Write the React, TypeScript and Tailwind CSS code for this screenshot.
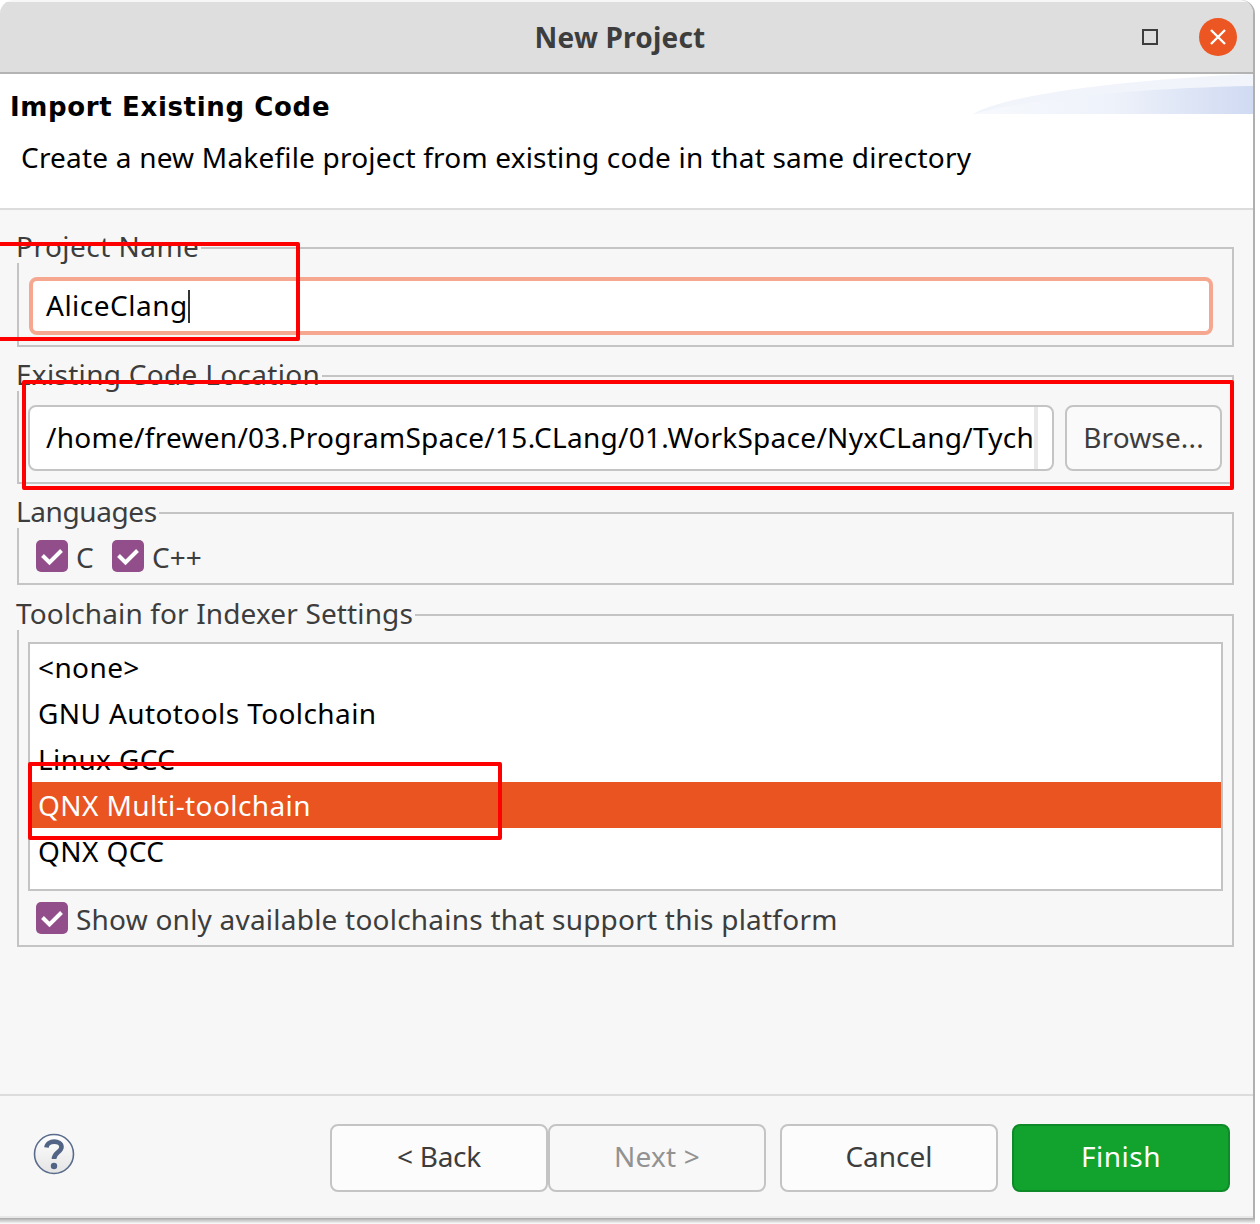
import type { ReactNode } from "react";

const uiFont = "font-['Noto_Sans','Open_Sans',sans-serif]";

function CheckBox() {
  return (
    <span className="flex h-8 w-8 shrink-0 items-center justify-center rounded-[5px] bg-[#924d8b]">
      <svg width="24" height="24" viewBox="0 0 24 24" fill="none">
        <path d="M2.5 11.5 L9.5 18.5 L21.5 6.5" stroke="#ffffff" strokeWidth="4" />
      </svg>
    </span>
  );
}

function Group({ title, titleClass, className, children }: { title: string; titleClass: string; className: string; children: ReactNode }) {
  return (
    <fieldset className={`ml-[17px] mr-[19px] min-w-0 border-2 border-[#c4c4c4] ${className}`}>
      <legend className={`-ml-[3px] h-[30px] bg-[#f7f7f7] pr-0.5 text-[28px] leading-[26px] text-[#3d3d3d] ${titleClass}`}>
        {title}
      </legend>
      {children}
    </fieldset>
  );
}

function FooterButton({ label, className }: { label: string; className: string }) {
  return (
    <button className={`flex h-[68px] w-[218px] items-center justify-center rounded-lg border-2 pb-1 text-[28px] ${className}`}>
      {label}
    </button>
  );
}

const toolchains = ["<none>", "GNU Autotools Toolchain", "Linux GCC", "QNX Multi-toolchain", "QNX QCC"];

export default function App() {
  return (
    <div className={`relative h-[1224px] w-[1260px] overflow-hidden bg-white ${uiFont}`}>
      <div className="flex h-[1218px] w-[1255px] flex-col overflow-hidden rounded-t-[14px] border-r-2 border-r-[#b0b0b0] bg-[#f7f7f7] pt-0.5">
        {/* Title bar */}
        <div className="relative flex h-[72px] shrink-0 items-center justify-center border-b-2 border-[#b3b3b3] bg-[#dedede] pr-[13px]">
          <span className="text-[28px] font-bold tracking-[0.2px] text-[#3d3d3d]">New Project</span>
          <span className="absolute left-[1142px] top-[27px] h-4 w-4 border-2 border-[#3d3d3d]" />
          <span className="absolute left-[1199px] top-[16px] flex h-[38px] w-[38px] items-center justify-center rounded-full bg-[#ec5623]">
            <svg width="20" height="20" viewBox="0 0 20 20" fill="none">
              <path d="M3 3 L17 17 M17 3 L3 17" stroke="#ffffff" strokeWidth="2.4" />
            </svg>
          </span>
        </div>

        {/* Wizard header */}
        <div className="relative h-[136px] shrink-0 border-b-2 border-[#dcdcdc] bg-white">
          <svg className="absolute left-[973px] top-0" width="280" height="40" viewBox="0 0 280 40">
            <defs>
              <linearGradient id="banner" x1="0" y1="0" x2="1" y2="0">
                <stop offset="0" stopColor="#f7f9fd" />
                <stop offset="0.5" stopColor="#eef2fa" />
                <stop offset="1" stopColor="#d0daf2" />
              </linearGradient>
            </defs>
            <path d="M0 40 C30 22 140 6 280 0 L280 40 Z" fill="#f1f4fb" />
            <path d="M0 40 C60 24 170 14 280 12 L280 40 Z" fill="url(#banner)" />
          </svg>
          <div className="pl-[10px] pt-[15px] font-['DejaVu_Sans',sans-serif] text-[26px] font-bold leading-[36px] tracking-[0.65px] text-black">
            Import Existing Code
          </div>
          <div className="relative pl-[21px] pt-[13px] text-[28px] leading-[38px] tracking-[0.2px] text-black">
            Create a new Makefile project from existing code in that same directory
          </div>
        </div>

        {/* Form */}
        <div className="flex flex-1 flex-col pt-[23px]">
          <Group title="Project Name" titleClass="tracking-[0.47px]" className="pb-[10px]">
            <div className="ml-[10px] mr-[19px] mt-[14px] flex h-[58px] items-center rounded-lg border-4 border-[#f5a78f] bg-white pb-0.5 pl-[13px] text-[28px] tracking-[0.5px] text-black">
              AliceClang
              <span className="mt-0.5 h-[33px] w-0.5 bg-[#333333]" />
            </div>
          </Group>

          <Group title="Existing Code Location" titleClass="tracking-[0.3px]" className="mt-[14px] pb-[11px]">
            <div className="ml-[9px] mr-[10px] mt-[14px] flex h-[66px] gap-[11px]">
              <div className="flex flex-1 items-center overflow-hidden rounded-lg border-2 border-[#c4c4c4] bg-white pl-4 pr-[14px]">
                <div className="flex-1 overflow-hidden whitespace-nowrap pb-0.5 text-[28px] tracking-[0.28px] text-black">
                  /home/frewen/03.ProgramSpace/15.CLang/01.WorkSpace/NyxCLang/Tych
                </div>
                <div className="h-full w-1 shrink-0 bg-[#e8e8e8]" />
              </div>
              <button className="w-[157px] rounded-lg border-2 border-[#c4c4c4] bg-[#fafafa] pb-0.5 text-[28px] tracking-[0.14px] text-[#3d3d3d]">
                Browse...
              </button>
            </div>
          </Group>

          <Group title="Languages" titleClass="tracking-[-0.4px]" className="mt-[14px] pb-[11px]">
            <div className="ml-[17px] mt-3 flex h-8 items-center text-[28px] text-[#3d3d3d]">
              <CheckBox />
              <span className="ml-2 w-[36px] pt-0.5">C</span>
              <CheckBox />
              <span className="ml-2 pt-0.5">C++</span>
            </div>
          </Group>

          <Group title="Toolchain for Indexer Settings" titleClass="tracking-[0.13px]" className="mt-[15px] pb-[11px]">
            <div className="mx-[9px] mt-3 h-[249px] border-2 border-[#c4c4c4] bg-white text-[28px] tracking-[0.4px]">
              {toolchains.map((name) => (
                <div
                  key={name}
                  className={`h-[46px] pl-2 leading-[46px] ${name === "QNX Multi-toolchain" ? "bg-[#e95420] text-white" : "text-black"}`}
                >
                  {name}
                </div>
              ))}
            </div>
            <div className="ml-[17px] mt-[11px] flex h-8 items-center gap-2 text-[28px] tracking-[0.22px] text-[#3d3d3d]">
              <CheckBox />
              <span className="pt-0.5">Show only available toolchains that support this platform</span>
            </div>
          </Group>
        </div>

        {/* Footer */}
        <div className="flex h-[124px] shrink-0 items-start border-t-2 border-[#dcdcdc] border-b-2 border-b-[#e8e8e8] pl-[33px] pt-7">
          <svg className="mt-[9px]" width="42" height="42" viewBox="0 0 42 42">
            <defs>
              <linearGradient id="help" x1="0" y1="0" x2="0" y2="1">
                <stop offset="0" stopColor="#ffffff" />
                <stop offset="1" stopColor="#e4e4e4" />
              </linearGradient>
            </defs>
            <circle cx="21" cy="21" r="19.5" fill="url(#help)" stroke="#5a6c8c" strokeWidth="1.6" />
            <path d="M13.5 14.5 C14 6.5 28.5 7 28.5 14 C28.5 19.5 21 19 21 26" fill="none" stroke="#526485" strokeWidth="4.6" />
            <circle cx="21" cy="33" r="3.2" fill="#526485" />
          </svg>
          <div className="ml-[255px] flex">
            <FooterButton label="< Back" className="border-[#c4c4c4] bg-[#fcfcfc] tracking-[-0.27px] text-[#3d3d3d]" />
            <FooterButton label="Next >" className="border-[#c4c4c4] bg-[#f8f8f8] tracking-[0.2px] text-[#929292]" />
            <FooterButton label="Cancel" className="ml-[14px] border-[#c4c4c4] bg-[#fcfcfc] text-[#3d3d3d]" />
            <FooterButton label="Finish" className="ml-[14px] border-[#0f8a28] bg-[#12a32e] tracking-[0.5px] text-white" />
          </div>
        </div>
      </div>
      <div className="h-1.5 w-[1255px] bg-gradient-to-b from-[#a8a8a8] to-white" />

      {/* Red annotation boxes drawn over the screenshot */}
      <div className="absolute left-[-4px] top-[242px] h-[99px] w-[304px] rounded-[2px] border-4 border-[#fe0000]" />
      <div className="absolute left-[22px] top-[380px] h-[110px] w-[1212px] rounded-[2px] border-4 border-[#fe0000]" />
      <div className="absolute left-[28px] top-[762px] h-[78px] w-[474px] rounded-[2px] border-4 border-[#fe0000]" />
    </div>
  );
}
